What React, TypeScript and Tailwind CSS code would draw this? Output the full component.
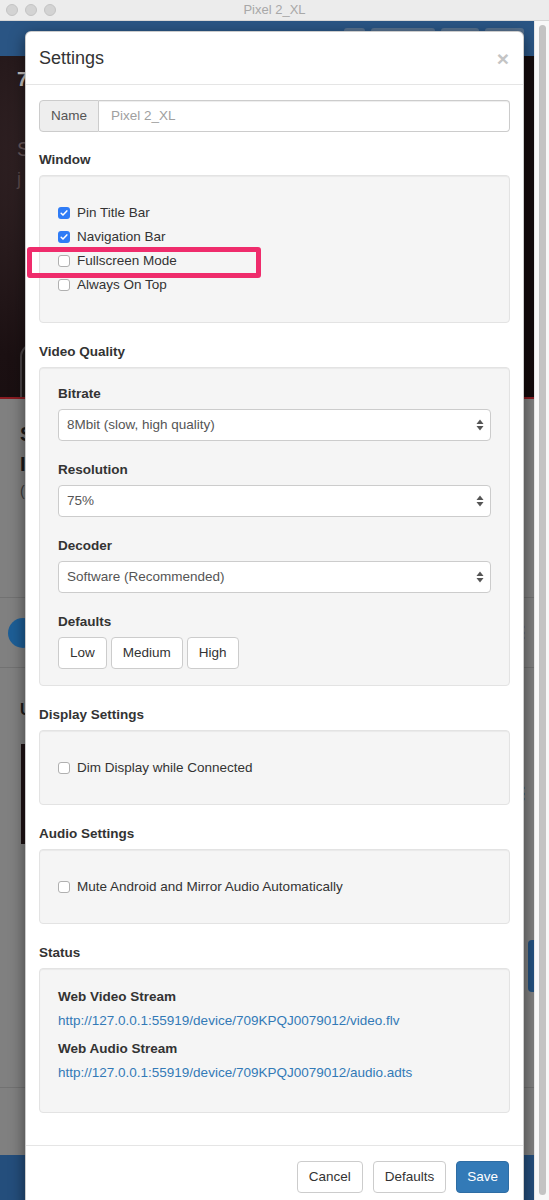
import React from 'react';

const Check: React.FC<{ on?: boolean }> = ({ on }) =>
  on ? (
    <span className="w-[12px] h-[12px] rounded-[3px] bg-[#2f7cf6] flex items-center justify-center shrink-0">
      <svg viewBox="0 0 12 12" className="w-[10px] h-[10px]">
        <path d="M2.6 6.3l2.2 2.2 4.6-5" stroke="white" strokeWidth="1.8" fill="none" strokeLinecap="round" strokeLinejoin="round" />
      </svg>
    </span>
  ) : (
    <span className="w-[12px] h-[12px] rounded-[3px] bg-white border border-[#b0b0b0] shrink-0" />
  );

const CheckRow: React.FC<{ label: string; on?: boolean; children?: React.ReactNode }> = ({ label, on, children }) => (
  <div className="relative h-[24px] flex items-center gap-[7px]">
    <Check on={on} />
    <span>{label}</span>
    {children}
  </div>
);

const Section: React.FC<{ title: string; className: string; children: React.ReactNode }> = ({ title, className, children }) => (
  <div className="mb-[19px]">
    <div className="font-bold h-[20px] leading-[20px] mb-[5px]">{title}</div>
    <div className={'bg-[#f5f5f5] border border-[#e3e3e3] rounded-[4px] shadow-[inset_0_1px_1px_rgba(0,0,0,0.05)] px-[18px] ' + className}>
      {children}
    </div>
  </div>
);

const SelectBox: React.FC<{ label: string; value: string }> = ({ label, value }) => (
  <div className="mb-[19px]">
    <div className="font-bold h-[20px] leading-[20px] mb-[5px]">{label}</div>
    <div className="h-[32px] bg-white border border-[#ccc] rounded-[4px] flex items-center justify-between pl-[8px] pr-[6px] text-[#555]">
      <span>{value}</span>
      <svg viewBox="0 0 8 12" className="w-[8px] h-[12px]">
        <path d="M4 0.5L7.5 5H0.5z" fill="#555" />
        <path d="M4 11.5L7.5 7H0.5z" fill="#555" />
      </svg>
    </div>
  </div>
);

const Btn: React.FC<{ children: React.ReactNode; primary?: boolean }> = ({ children, primary }) => (
  <button
    className={
      'h-[32px] px-[11px] rounded-[4px] border ' +
      (primary ? 'bg-[#337ab7] border-[#2e6da4] text-white' : 'bg-white border-[#ccc] text-[#333]')
    }
  >
    {children}
  </button>
);

export default function App() {
  return (
    <div className="w-[549px] h-[1200px] overflow-hidden bg-white font-['Liberation_Sans',Arial,sans-serif]">
      {/* window chrome */}
      <div className="h-[21px] relative flex items-center justify-center bg-[#ececec] border-b border-[#d6d6d6]">
        <div className="absolute left-[6px] top-[4px] flex gap-[7px]">
          <span className="w-[12px] h-[12px] rounded-full bg-[#d3d3d3] border border-[#c4c4c4]" />
          <span className="w-[12px] h-[12px] rounded-full bg-[#d3d3d3] border border-[#c4c4c4]" />
          <span className="w-[12px] h-[12px] rounded-full bg-[#d3d3d3] border border-[#c4c4c4]" />
        </div>
        <span className="text-[13px] text-[#a8a8a8]">Pixel 2_XL</span>
      </div>

      <div className="flex h-[1179px]">
        {/* app behind the dimmed backdrop */}
        <div className="w-[534px] relative flex flex-col overflow-hidden">
          <div className="h-[35px] bg-[#2a5584] flex justify-end items-start gap-[6px] pt-[7px] pr-[10px]">
            <span className="w-[21px] h-[22px] rounded-[3px] bg-[#56708d]" />
            <span className="w-[64px] h-[22px] rounded-[3px] bg-[#56708d]" />
            <span className="w-[38px] h-[22px] rounded-[3px] bg-[#56708d]" />
            <span className="w-[39px] h-[22px] rounded-[3px] bg-[#56708d]" />
          </div>
          <div className="h-[341px] bg-[radial-gradient(circle_at_20%_30%,#3a2a2c_0%,#1b1012_45%,#120a0b_100%)] pl-[17px] pt-[8px]">
            <div className="text-[20px] font-bold text-[#c9c4c4]">7</div>
            <div className="mt-[40px] text-[20px] text-[#6a5a5c]">S</div>
            <div className="mt-[2px] text-[18px] text-[#5a4a4c]">j</div>
            <div className="mt-[150px] ml-[3px] w-[50px] h-[70px] rounded-t-[14px] border-2 border-[#4a4446] bg-[#1e1818]" />
          </div>
          <div className="h-[2px] bg-[#8a1c22]" />
          <div className="h-[199px] bg-[#808080] border-b border-[#727272] pl-[20px] pt-[20px] text-[#1a1a1a]">
            <div className="text-[20px] font-bold leading-[30px]">S</div>
            <div className="text-[20px] font-bold leading-[30px]">I</div>
            <div className="text-[14px] leading-[24px] text-[#3a3a3a]">(</div>
          </div>
          <div className="h-[70px] bg-[#808080] border-b border-[#727272] flex items-center justify-between pl-[8px] pr-[3px]">
            <span className="w-[30px] h-[30px] rounded-full bg-[#1d5e96]" />
            <span className="text-[16px] leading-none text-[#5a3a2a] font-bold">⋮</span>
          </div>
          <div className="h-[76px] bg-[#808080] pl-[20px] pt-[30px] text-[16px] font-bold text-[#1a1a1a]">
            <div>U</div>
          </div>
          <div className="h-[100px] bg-[#808080] flex items-center justify-between pl-[21px] pr-[3px]">
            <span className="h-full w-[120px] bg-[#1e1214]" />
            <span className="text-[16px] leading-none text-[#2a2a2a] font-bold">⋮</span>
          </div>
          <div className="h-[244px] bg-[#808080] border-b border-[#727272] flex justify-end items-center">
            <span className="w-[6px] h-[52px] rounded-l-[4px] bg-[#23507e]" />
          </div>
          <div className="flex-1 bg-[#808080]" />
          <div className="h-[45px] bg-[#244e7c]" />

          {/* settings modal */}
          <div className="absolute left-[25px] top-[10px] w-[499px] bg-white rounded-[6px] border border-[rgba(0,0,0,0.2)] shadow-[0_5px_15px_rgba(0,0,0,0.5)] text-[13.5px] text-[#333]">
            <div className="h-[53px] pl-[13px] pr-[14px] flex items-center justify-between border-b border-[#e5e5e5]">
              <span className="text-[18px]">Settings</span>
              <span className="text-[21px] font-bold leading-none text-[#c4c4c4]">×</span>
            </div>

            <div className="px-[13px] pt-[15px] pb-[13px]">
              <div className="flex h-[32px] mb-[18px]">
                <span className="w-[60px] bg-[#eee] border border-[#ccc] rounded-l-[4px] flex items-center justify-center text-[#555]">
                  Name
                </span>
                <input
                  className="flex-1 min-w-0 border border-l-0 border-[#ccc] rounded-r-[4px] pl-[12px] outline-none placeholder:text-[#a0a0a0] shadow-[inset_0_1px_1px_rgba(0,0,0,0.075)]"
                  placeholder="Pixel 2_XL"
                />
              </div>

              <Section title="Window" className="pt-[25px] pb-[25px]">
                <CheckRow label="Pin Title Bar" on />
                <CheckRow label="Navigation Bar" on />
                <CheckRow label="Fullscreen Mode">
                  <span className="absolute left-[-31px] top-[-2px] w-[234px] h-[31px] border-[5px] border-[#ef2c6c] rounded-[3px]" />
                </CheckRow>
                <CheckRow label="Always On Top" />
              </Section>

              <Section title="Video Quality" className="pt-[16px] pb-[16px]">
                <SelectBox label="Bitrate" value="8Mbit (slow, high quality)" />
                <SelectBox label="Resolution" value="75%" />
                <SelectBox label="Decoder" value="Software (Recommended)" />
                <div className="font-bold h-[20px] leading-[20px] mb-[5px]">Defaults</div>
                <div className="flex gap-[4px]">
                  <Btn>Low</Btn>
                  <Btn>Medium</Btn>
                  <Btn>High</Btn>
                </div>
              </Section>

              <Section title="Display Settings" className="pt-[25px] pb-[24px]">
                <CheckRow label="Dim Display while Connected" />
              </Section>

              <Section title="Audio Settings" className="pt-[25px] pb-[24px]">
                <CheckRow label="Mute Android and Mirror Audio Automatically" />
              </Section>

              <Section title="Status" className="pt-[18px] pb-[29px]">
                <div className="font-bold h-[20px] leading-[20px] mb-[4px]">Web Video Stream</div>
                <a className="block h-[20px] leading-[20px] mb-[8px] text-[#337ab7]">
                  http://127.0.0.1:55919/device/709KPQJ0079012/video.flv
                </a>
                <div className="font-bold h-[20px] leading-[20px] mb-[4px]">Web Audio Stream</div>
                <a className="block h-[20px] leading-[20px] text-[#337ab7]">
                  http://127.0.0.1:55919/device/709KPQJ0079012/audio.adts
                </a>
              </Section>
            </div>

            <div className="border-t border-[#e5e5e5] pl-[14px] pr-[14px] pt-[15px] pb-[15px] flex justify-end gap-[10px]">
              <Btn>Cancel</Btn>
              <Btn>Defaults</Btn>
              <button className="h-[32px] px-[10px] rounded-[4px] border bg-[#337ab7] border-[#2e6da4] text-white">Save</button>
            </div>
          </div>
        </div>

        {/* scrollbar */}
        <div className="w-[15px] bg-[#f8f8f8] border-l border-[#e6e6e6] flex justify-center pt-[4px]">
          <div className="w-[7px] h-[1170px] rounded-full bg-[#c3c3c3]" />
        </div>
      </div>
    </div>
  );
}
